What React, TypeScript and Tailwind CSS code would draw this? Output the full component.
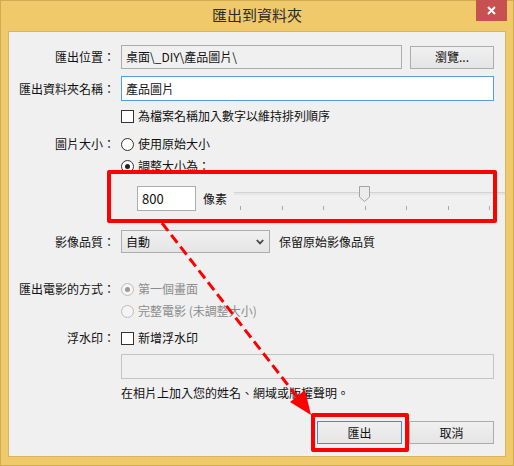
const font = { fontFamily: '"Noto Sans CJK TC", "Noto Sans", sans-serif' };

function Radio({ checked, disabled }: { checked?: boolean; disabled?: boolean }) {
  return (
    <span
      className={`w-[13px] h-[13px] rounded-full border flex items-center justify-center shrink-0 ${
        disabled ? "border-[#bcbcbc] bg-[#f4f4f4]" : "border-[#333] bg-white"
      }`}
    >
      {checked && (
        <span className={`w-[5px] h-[5px] rounded-full ${disabled ? "bg-[#9a9a9a]" : "bg-[#222]"}`} />
      )}
    </span>
  );
}

function Check() {
  return <span className="w-[13px] h-[13px] border border-[#333] bg-white shrink-0" />;
}

function Label({ text }: { text: string }) {
  return <div className="w-[112px] shrink-0 text-right pr-[6px]">{text}</div>;
}

export default function App() {
  return (
    <div
      className="relative w-[514px] h-[466px] bg-[#f0c96b] border border-[#d2aa50] flex flex-col text-[12px] leading-[16px] text-[#111]"
      style={font}
    >
      {/* title bar */}
      <div className="h-[30px] flex items-center justify-center relative">
        <span className="text-[15px] text-[#2a2a2a] mt-[-2px]">匯出到資料夾</span>
        <div className="absolute right-[6px] top-[-1px] w-[31px] h-[21px] bg-[#c75050] flex items-center justify-center">
          <svg width="9" height="9" viewBox="0 0 9 9">
            <path d="M1 1 L8 8 M8 1 L1 8" stroke="#fff" strokeWidth="2" />
          </svg>
        </div>
      </div>

      {/* client area */}
      <div className="flex-1 mx-[7px] mb-[8px] bg-[#f0f0f0] border border-[#dcb460] flex flex-col pr-[11px]">
        {/* 匯出位置 */}
        <div className="mt-[13px] h-[24px] flex items-center">
          <Label text="匯出位置：" />
          <div className="w-[281px] h-[24px] border border-[#acacac] bg-[#f0f0f0] flex items-center pl-[4px]">
            桌面\_DIY\產品圖片\
          </div>
          <div className="ml-[8px] flex-1 h-[23px] border border-[#acacac] bg-gradient-to-b from-[#f0f0f0] to-[#e5e5e5] flex items-center justify-center">
            瀏覽...
          </div>
        </div>

        {/* 匯出資料夾名稱 */}
        <div className="mt-[7px] h-[25px] flex items-center">
          <Label text="匯出資料夾名稱：" />
          <div className="flex-1 h-[25px] border border-[#569de5] bg-white flex items-center pl-[4px]">產品圖片</div>
        </div>

        {/* 排列順序 */}
        <div className="mt-[7px] h-[16px] flex items-center">
          <div className="w-[112px] shrink-0" />
          <Check />
          <span className="ml-[4px]">為檔案名稱加入數字以維持排列順序</span>
        </div>

        {/* 圖片大小 */}
        <div className="mt-[12px] h-[16px] flex items-center">
          <Label text="圖片大小：" />
          <Radio />
          <span className="ml-[4px]">使用原始大小</span>
        </div>
        <div className="mt-[6px] h-[16px] flex items-center">
          <div className="w-[112px] shrink-0" />
          <Radio checked />
          <span className="ml-[4px]">調整大小為：</span>
        </div>

        {/* slider row */}
        <div className="mt-[12px] h-[25px] flex items-center">
          <div className="w-[128px] shrink-0" />
          <div className="w-[59px] h-[25px] border border-[#acacac] bg-white flex items-center pl-[4px] text-[13px]">
            800
          </div>
          <span className="ml-[7px]">像素</span>
          <div className="relative ml-[7px] flex-1 h-[25px] mr-[-11px]">
            <div className="absolute left-0 right-0 top-[6px] h-[3px] border-t border-[#d3d3d3] bg-[#e7e7e7]" />
            <svg className="absolute left-[124px] top-0" width="13" height="17" viewBox="0 0 13 17">
              <path d="M1.5 0.5 H11.5 V11 L6.5 15.5 L1.5 11 Z" fill="#ececec" stroke="#a3a3a3" />
            </svg>
            <div className="absolute left-[6px] w-[250px] top-[20px] flex justify-between">
              {[0, 1, 2, 3, 4, 5, 6].map((i) => (
                <span key={i} className="w-px h-[4px] bg-[#a8a8a8]" />
              ))}
            </div>
          </div>
        </div>

        {/* 影像品質 */}
        <div className="mt-[19px] h-[23px] flex items-center">
          <Label text="影像品質：" />
          <div className="w-[149px] h-[23px] border border-[#acacac] bg-gradient-to-b from-[#f0f0f0] to-[#e5e5e5] flex items-center pl-[4px] justify-between pr-[5px]">
            <span>自動</span>
            <svg width="8" height="6" viewBox="0 0 8 6">
              <path d="M0.8 1 L4 4.4 L7.2 1" stroke="#444" strokeWidth="1.8" fill="none" />
            </svg>
          </div>
          <span className="ml-[9px]">保留原始影像品質</span>
        </div>

        {/* 匯出電影的方式 */}
        <div className="mt-[28px] h-[16px] flex items-center">
          <Label text="匯出電影的方式：" />
          <Radio checked disabled />
          <span className="ml-[4px] text-[#8c8c8c]">第一個畫面</span>
        </div>
        <div className="mt-[6px] h-[16px] flex items-center">
          <div className="w-[112px] shrink-0" />
          <Radio disabled />
          <span className="ml-[4px] text-[#8c8c8c]">完整電影 (未調整大小)</span>
        </div>

        {/* 浮水印 */}
        <div className="mt-[11px] h-[16px] flex items-center">
          <Label text="浮水印：" />
          <Check />
          <span className="ml-[4px]">新增浮水印</span>
        </div>
        <div className="mt-[8px] h-[25px] flex items-center">
          <div className="w-[112px] shrink-0" />
          <div className="flex-1 h-[25px] border border-[#c4c4c4] bg-[#f0f0f0]" />
        </div>
        <div className="mt-[6px] h-[16px] flex items-center">
          <div className="w-[112px] shrink-0" />
          <span>在相片上加入您的姓名、網域或版權聲明。</span>
        </div>

        {/* buttons */}
        <div className="mt-[20px] h-[23px] flex justify-end gap-[7px]">
          <div className="w-[85px] h-[23px] border border-[#3c8fe0] bg-gradient-to-b from-[#f0f0f0] to-[#e5e5e5] flex items-center justify-center">
            匯出
          </div>
          <div className="w-[85px] h-[23px] border border-[#acacac] bg-gradient-to-b from-[#f0f0f0] to-[#e5e5e5] flex items-center justify-center">
            取消
          </div>
        </div>
      </div>

      {/* annotations */}
      <div className="absolute left-[106px] top-[169px] w-[390px] h-[53px] border-[4px] border-[#ff0000] rounded-[2px] pointer-events-none" />
      <div className="absolute left-[310px] top-[412px] w-[98px] h-[39px] border-[4px] border-[#ff0000] rounded-[2px] pointer-events-none" />
      <svg className="absolute left-[-1px] top-[-1px] pointer-events-none" width="514" height="466" viewBox="0 0 514 466">
        <line x1="162" y1="223" x2="298" y2="398" stroke="#ff0000" strokeWidth="3" strokeDasharray="10 5" />
        <polygon points="311,415 290,402 305,390" fill="#ff0000" />
      </svg>
    </div>
  );
}
